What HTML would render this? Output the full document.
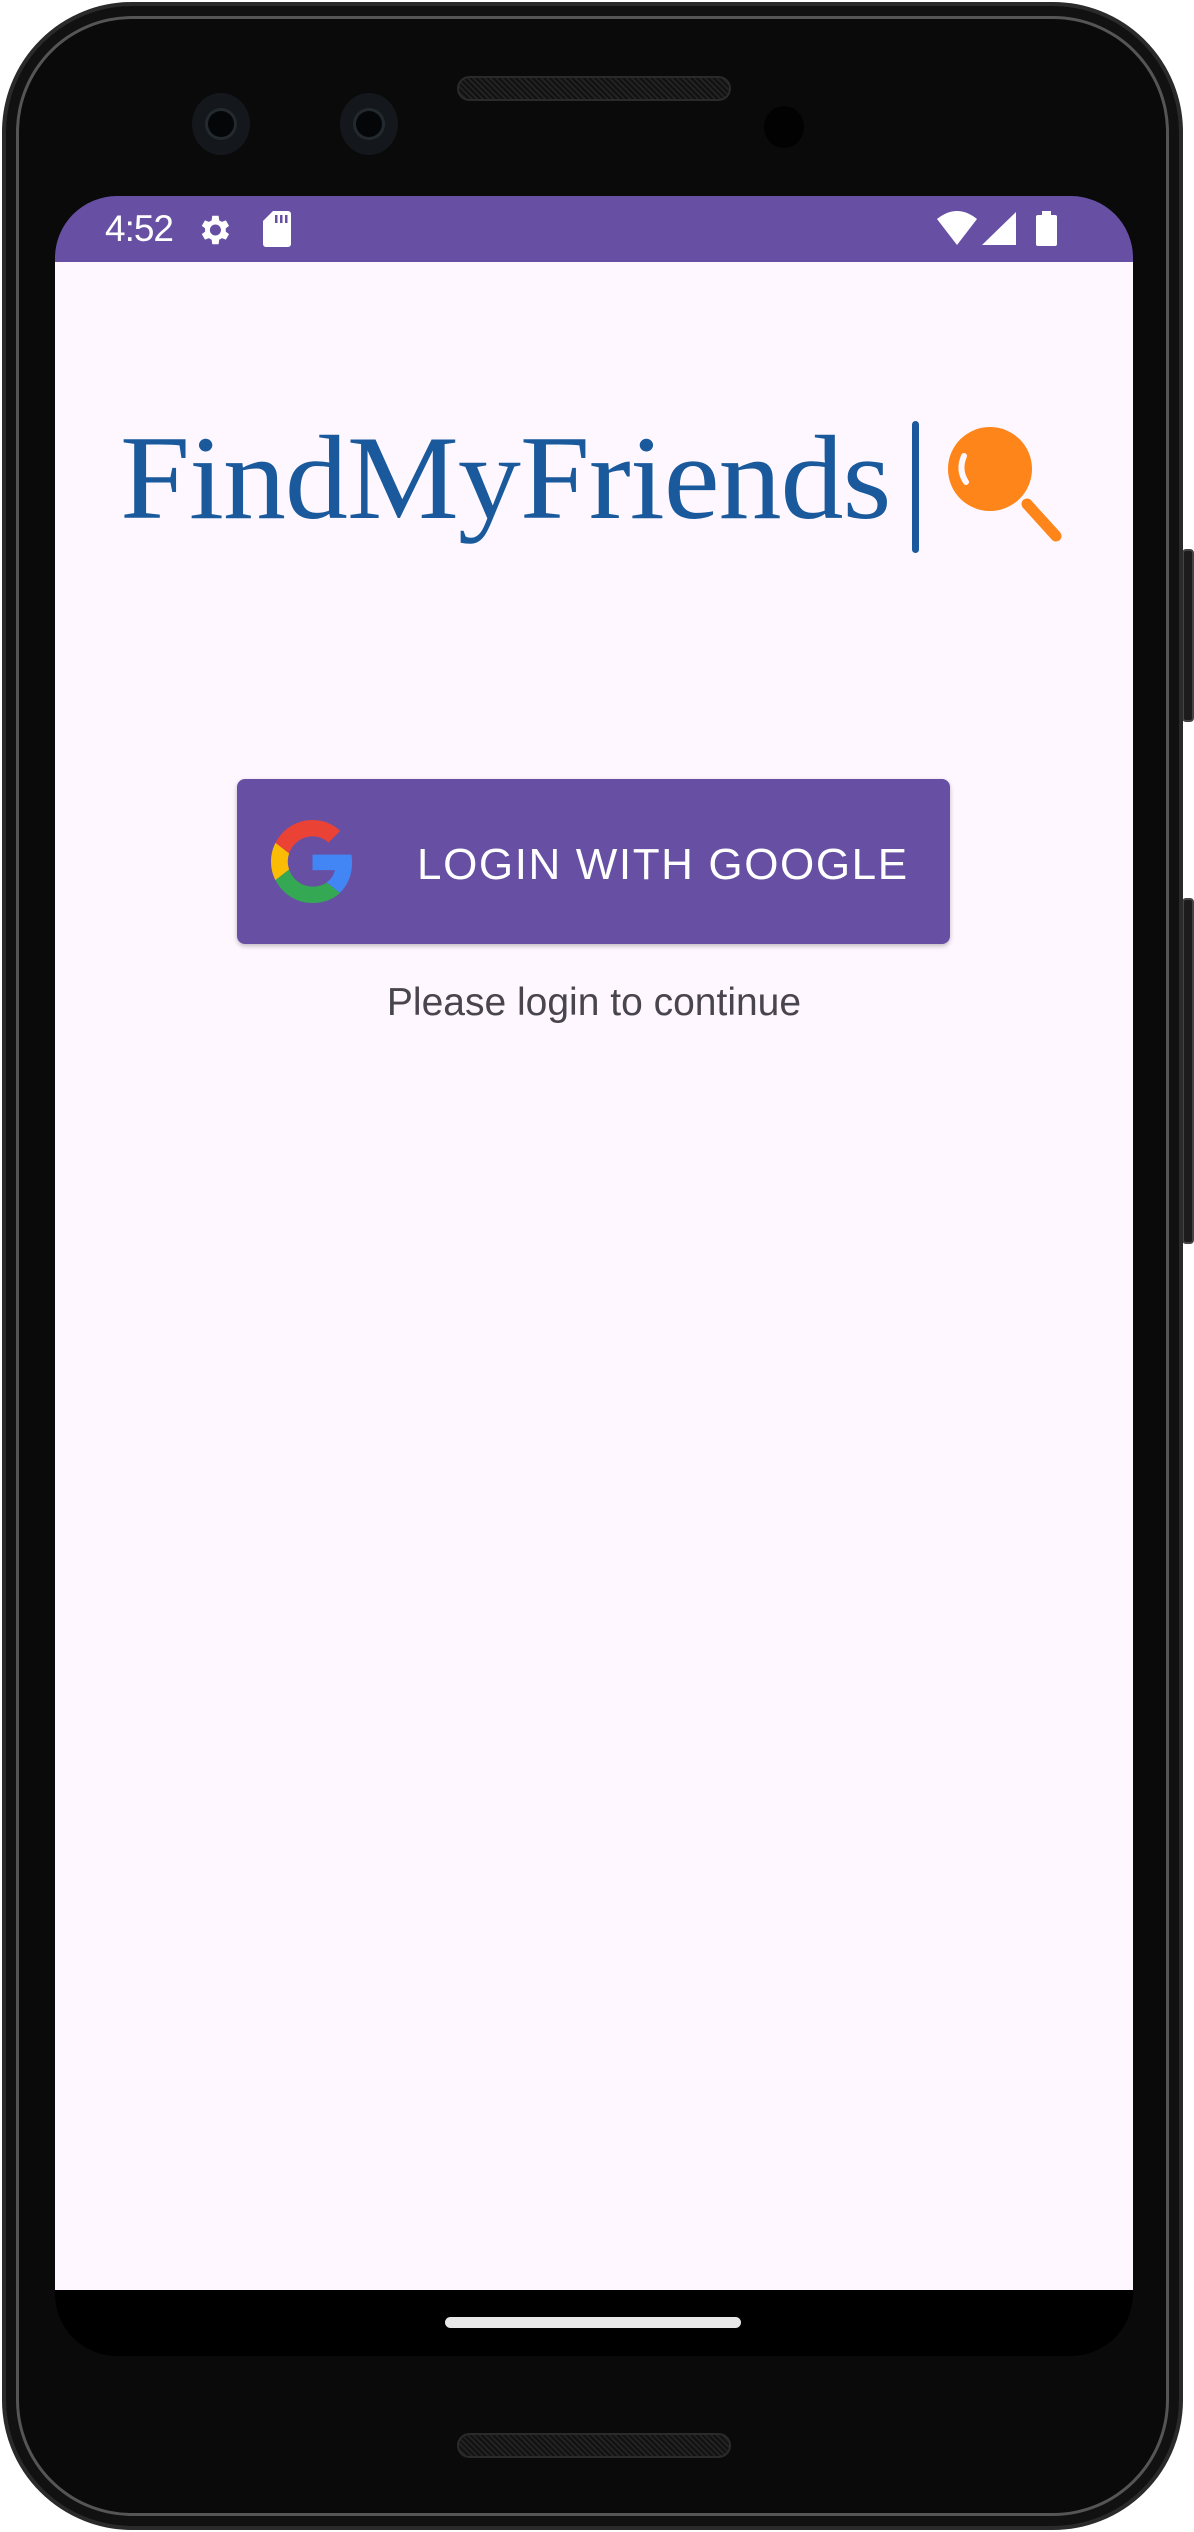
<!DOCTYPE html>
<html><head><meta charset="utf-8"><style>
*{margin:0;padding:0;box-sizing:border-box}
html,body{width:1194px;height:2532px;background:#fff;overflow:hidden;position:relative;font-family:"Liberation Sans",sans-serif}
.abs{position:absolute}
.body{left:2px;top:2px;width:1181px;height:2528px;border-radius:130px;background:#0a0a0a;border:4px solid #2a2a2a;box-shadow:inset 0 0 0 10px #111,inset 0 0 0 13px #555,inset 0 0 0 20px #0a0a0a}
.btn{background:#1c1c1c;border:2px solid #444;border-radius:4px;left:1182px;width:12px}
.screen{left:55px;top:196px;width:1078px;height:2160px;background:#000;border-radius:62px;overflow:hidden}
.status{left:0;top:0;width:1078px;height:66px;background:#6750a4}
.content{left:0;top:66px;width:1078px;height:2028px;background:#fef7ff}
.cam{width:58px;height:62px;border-radius:50%;background:#14181c;top:93px}
.cam::after{content:"";position:absolute;left:16px;top:18px;width:26px;height:26px;border-radius:50%;background:#050608;box-shadow:0 0 0 3px #222a30}
.spk{left:457px;width:274px;height:25px;border-radius:13px;background:#151515;border:2px solid #2a2a2a;background-image:repeating-linear-gradient(45deg,#222 0 2px,#111 2px 4px)}
</style></head><body>
<div class="abs btn" style="top:549px;height:173px"></div>
<div class="abs btn" style="top:898px;height:346px"></div>
<div class="abs body"></div>
<div class="abs spk" style="top:76px"></div>
<div class="abs cam" style="left:192px"></div>
<div class="abs cam" style="left:340px"></div>
<div class="abs" style="left:764px;top:106px;width:40px;height:42px;border-radius:50%;background:#020202"></div>
<div class="abs spk" style="top:2433px"></div>
<div class="abs screen">
  <div class="abs status">
    <div class="abs" style="left:50px;top:12px;color:#fff;font-size:37px;letter-spacing:-1px">4:52</div>
    <svg class="abs" style="left:140px;top:15px" width="38" height="38" viewBox="0 0 24 24"><path fill="#fff" d="M19.4 13a7.5 7.5 0 000-2l2.1-1.6-2-3.5-2.5 1a7 7 0 00-1.7-1L14.9 3h-4l-.4 2.9a7 7 0 00-1.7 1l-2.5-1-2 3.5L6.4 11a7.5 7.5 0 000 2l-2.1 1.6 2 3.5 2.5-1a7 7 0 001.7 1l.4 2.9h4l.4-2.9a7 7 0 001.7-1l2.5 1 2-3.5zM12.9 15.5a3.5 3.5 0 110-7 3.5 3.5 0 010 7z"/></svg>
    <svg class="abs" style="left:208px;top:15px" width="28" height="36" viewBox="0 0 28 36"><path fill="#fff" d="M10 0h15a3 3 0 013 3v30a3 3 0 01-3 3H3a3 3 0 01-3-3V10z"/><rect x="12" y="4" width="2.5" height="8" fill="#6750a4"/><rect x="17" y="4" width="2.5" height="8" fill="#6750a4"/><rect x="22" y="4" width="2.5" height="8" fill="#6750a4"/></svg>
    <svg class="abs" style="left:882px;top:15px" width="40" height="34" viewBox="0 0 40 34"><path fill="#fff" d="M0 8Q20-8 40 8L20 34z"/></svg>
    <svg class="abs" style="left:927px;top:16px" width="34" height="33" viewBox="0 0 34 33"><path fill="#fff" d="M34 0V33H0z"/></svg>
    <div class="abs" style="left:981px;top:19px;width:21px;height:31px;background:#fff;border-radius:2px"></div>
    <div class="abs" style="left:987px;top:15px;width:9px;height:5px;background:#fff"></div>
  </div>
  <div class="abs content">
    <div class="abs" style="left:65px;top:147px;font-family:'Liberation Serif','DejaVu Serif',serif;font-size:120px;color:#1a5a9c;white-space:nowrap;letter-spacing:-1px;transform:scaleX(1.05);transform-origin:left">FindMyFriends</div>
    <div class="abs" style="left:857px;top:159px;width:7px;height:132px;background:#1a5a9c;border-radius:4px"></div>
    <svg class="abs" style="left:888px;top:164px" width="122" height="120" viewBox="0 0 122 120">
      <line x1="84" y1="78" x2="113" y2="110" stroke="#fd8519" stroke-width="11" stroke-linecap="round"/>
      <circle cx="47" cy="43" r="42" fill="#fd8519"/>
      <path d="M21 30q-6 14 2 26" stroke="#fef7ff" stroke-width="6" fill="none" stroke-linecap="round"/>
    </svg>
    <div class="abs" style="left:182px;top:517px;width:713px;height:165px;background:#6750a4;border-radius:8px;box-shadow:0 2px 5px rgba(0,0,0,.25)">
      <svg class="abs" style="left:34px;top:41px" width="83" height="83" viewBox="0 0 48 48">
        <path fill="#EA4335" d="M24 9.5c3.5 0 6.7 1.2 9.2 3.6l6.8-6.8C35.9 2.4 30.5 0 24 0 14.6 0 6.6 5.4 2.6 13.2l7.9 6.2C12.4 13.7 17.7 9.5 24 9.5z"/>
        <path fill="#4285F4" d="M46.9 24.5c0-1.6-.1-3.1-.4-4.5H24v9h12.9c-.6 3-2.3 5.5-4.8 7.1l7.7 6c4.5-4.1 7.1-10.3 7.1-17.6z"/>
        <path fill="#FBBC05" d="M10.5 28.6c-.5-1.5-.8-3-.8-4.6s.3-3.2.8-4.6l-7.9-6.2C.9 16.5 0 20.1 0 24s.9 7.5 2.6 10.8z"/>
        <path fill="#34A853" d="M24 48c6.5 0 11.9-2.1 15.9-5.8l-7.7-6c-2.2 1.5-5 2.3-8.2 2.3-6.3 0-11.6-4.2-13.5-9.9l-7.9 6.2C6.6 42.6 14.6 48 24 48z"/>
      </svg>
      <div class="abs" style="left:180px;top:61px;color:#fff;font-size:44px;letter-spacing:1.6px;white-space:nowrap">LOGIN WITH GOOGLE</div>
    </div>
    <div class="abs" style="left:0;width:1078px;text-align:center;top:719px;color:#49454f;font-size:39px">Please login to continue</div>
  </div>
  <div class="abs" style="left:390px;top:2121px;width:296px;height:11px;border-radius:6px;background:#e8e8e8"></div>
</div>
</body></html>
